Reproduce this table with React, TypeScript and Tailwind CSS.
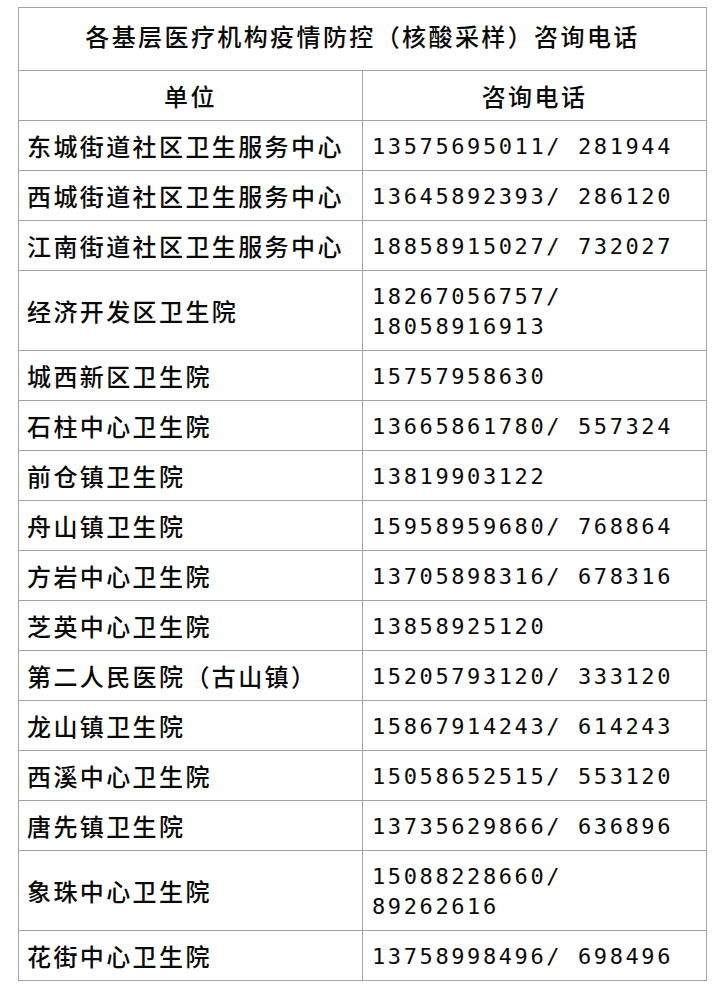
import React from "react";

const rows: [string, string[]][] = [
  ["东城街道社区卫生服务中心", ["13575695011/ 281944"]],
  ["西城街道社区卫生服务中心", ["13645892393/ 286120"]],
  ["江南街道社区卫生服务中心", ["18858915027/ 732027"]],
  ["经济开发区卫生院", ["18267056757/", "18058916913"]],
  ["城西新区卫生院", ["15757958630"]],
  ["石柱中心卫生院", ["13665861780/ 557324"]],
  ["前仓镇卫生院", ["13819903122"]],
  ["舟山镇卫生院", ["15958959680/ 768864"]],
  ["方岩中心卫生院", ["13705898316/ 678316"]],
  ["芝英中心卫生院", ["13858925120"]],
  ["第二人民医院（古山镇）", ["15205793120/ 333120"]],
  ["龙山镇卫生院", ["15867914243/ 614243"]],
  ["西溪中心卫生院", ["15058652515/ 553120"]],
  ["唐先镇卫生院", ["13735629866/ 636896"]],
  ["象珠中心卫生院", ["15088228660/", "89262616"]],
  ["花街中心卫生院", ["13758998496/ 698496"]],
];

export default function App() {
  return (
    <div className="bg-white min-h-[1000px] pt-[7px] pl-[18px]">
      <table className="w-[688px] border-collapse table-fixed text-[#0a0a0a] font-['Noto_Sans_CJK_SC',sans-serif]">
        <colgroup>
          <col className="w-[344px]" />
          <col className="w-[344px]" />
        </colgroup>
        <tbody>
          <tr>
            <td
              colSpan={2}
              className="h-[63px] border border-[#a3a3a3] text-center text-[24px] font-medium tracking-[2.4px] leading-[30px] pb-[6px]"
            >
              各基层医疗机构疫情防控（核酸采样）咨询电话
            </td>
          </tr>
          <tr>
            <td className="h-[50px] border border-[#a3a3a3] text-center text-[24px] font-medium tracking-[2.4px] leading-[30px]">
              单位
            </td>
            <td className="h-[50px] border border-[#a3a3a3] text-center text-[24px] font-medium tracking-[2.4px] leading-[30px]">
              咨询电话
            </td>
          </tr>
          {rows.map(([name, phones]) => (
            <tr key={name}>
              <td className="border border-[#a3a3a3] pl-[8px] py-[9.5px] text-[24px] font-medium tracking-[2.4px] leading-[30px] whitespace-nowrap">
                {name}
              </td>
              <td className="border border-[#a3a3a3] pl-[9px] pt-[11px] pb-[8px] text-[22px] tracking-[2.6px] leading-[30px] whitespace-pre font-['DejaVu_Sans_Mono',monospace]">
                {phones.map((p) => (
                  <div key={p}>{p}</div>
                ))}
              </td>
            </tr>
          ))}
        </tbody>
      </table>
    </div>
  );
}
